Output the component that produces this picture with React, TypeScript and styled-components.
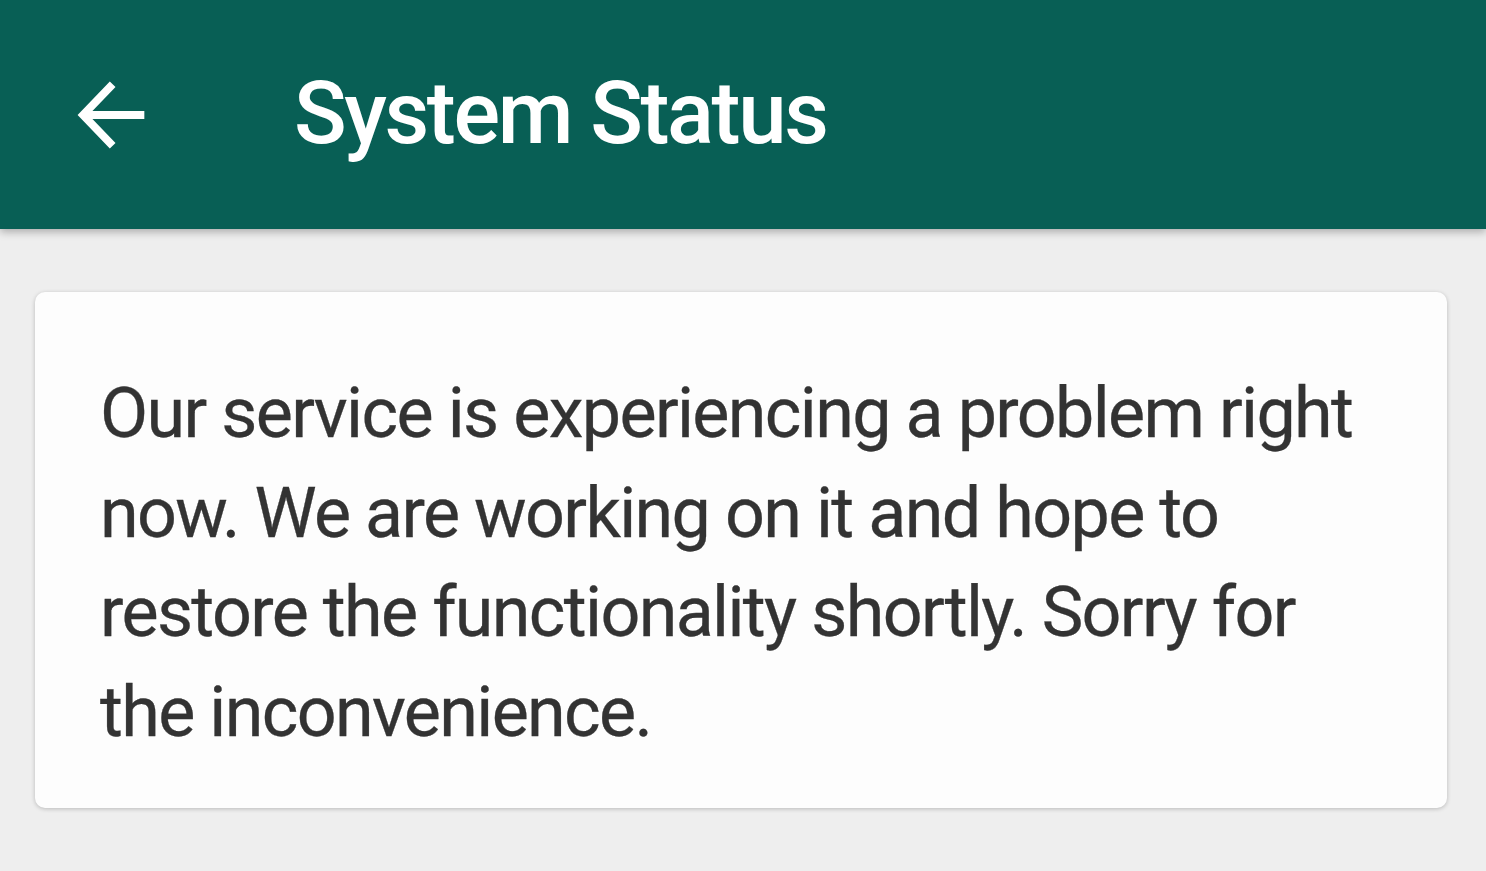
import React from "react";
import styled, { createGlobalStyle } from "styled-components";

const GlobalStyle = createGlobalStyle`
  html, body { margin: 0; padding: 0; }
  body {
    background: #eeeeee;
    font-family: Roboto, "Liberation Sans", sans-serif;
    width: 1486px;
    height: 871px;
    overflow: hidden;
  }
`

const AppBar = styled.header`
  height: 229px;
  background: #085f55;
  display: flex;
  align-items: center;
  padding-left: 61px;
  box-shadow: 0 3px 8px rgba(0, 0, 0, 0.28);
  position: relative;
  z-index: 1;
`

const BackButton = styled.button`
  width: 100px;
  height: 100px;
  padding: 0;
  border: none;
  background: none;
  color: #ffffff;
  display: flex;
  margin-top: 1px;
  svg { width: 100px; height: 100px; }
`

const Title = styled.h1`
  margin: -3px 0 0 133px;
  color: #ffffff;
  font-size: 87px;
  font-weight: 500;
  letter-spacing: -2.4px;
`

const Card = styled.div`
  margin: 63px 39px 0 35px;
  background: #fdfdfd;
  border-radius: 10px;
  box-shadow: 0 1px 4px rgba(0, 0, 0, 0.22);
  padding: 72px 60px 46px 65px;
`

const Message = styled.p`
  margin: 0;
  font-size: 70px;
  line-height: 99.5px;
  letter-spacing: -1.65px;
  color: #333333;
  -webkit-text-stroke: 0.3px #333333;
`

const BackArrow = () => (
  <svg viewBox="0 0 24 24" fill="none" stroke="currentColor" strokeWidth="1.9">
    <path d="M20 12H6" />
    <path d="M12.4 4.6 5.3 12l7.1 7.4" />
  </svg>
)

const App = () => {
  return (
    <>
      <GlobalStyle />
      <AppBar>
        <BackButton aria-label="Back">
          <BackArrow />
        </BackButton>
        <Title>System Status</Title>
      </AppBar>
      <Card>
        <Message>
          Our service is experiencing a problem right now. We are working on it and hope to
          restore the functionality shortly. Sorry for the inconvenience.
        </Message>
      </Card>
    </>
  )
}

export default App
